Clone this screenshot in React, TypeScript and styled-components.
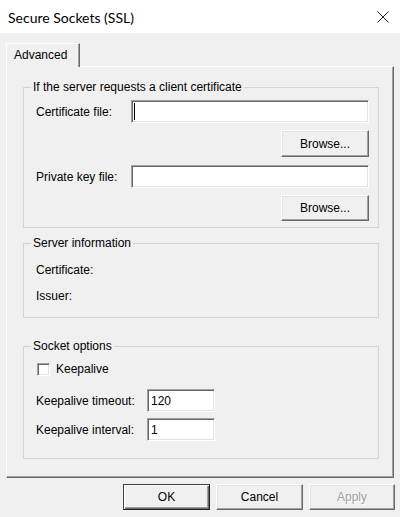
import React from "react";
import styled, { createGlobalStyle } from "styled-components";

const GlobalStyle = createGlobalStyle`
  html, body { margin: 0; padding: 0; background: #f0f0f0; }
  body {
    font-family: "Liberation Sans", Arial, sans-serif;
    font-size: 12px;
    color: #000;
  }
  * { box-sizing: border-box; }
`;

const Window = styled.div`
  width: 400px;
  height: 517px;
  background: #f0f0f0;
  display: flex;
  flex-direction: column;
  overflow: hidden;
`;

const TitleBar = styled.div`
  flex: none;
  height: 33px;
  background: #fff;
  display: flex;
  align-items: center;
  justify-content: space-between;
`;

const Title = styled.div`
  padding: 2px 0 0 8px;
  font-family: Lato, "Liberation Sans", sans-serif;
  font-size: 14px;
  line-height: 16px;
  color: #000;
`;

const CloseButton = styled.div`
  width: 34px;
  height: 33px;
  display: flex;
  align-items: center;
  justify-content: center;
`;

const Content = styled.div`
  padding: 10px 6px 0 6px;
  display: flex;
  flex-direction: column;
`;

const TabStrip = styled.div`
  height: 23px;
  display: flex;
  align-items: flex-start;
`;

const Tab = styled.div`
  position: relative;
  z-index: 1;
  width: 74px;
  height: 24px;
  padding: 0 0 2px 7px;
  display: flex;
  align-items: center;
  background: #f0f0f0;
  border-top: 1px solid #fff;
  border-left: 1px solid #fff;
  border-right: 1px solid #696969;
  box-shadow: inset -1px 0 0 #a0a0a0;
`;

const Panel = styled.div`
  height: 412px;
  padding: 13px 14px 0 16px;
  display: flex;
  flex-direction: column;
  border-top: 1px solid #fff;
  border-left: 1px solid #fff;
  border-right: 1px solid #696969;
  border-bottom: 1px solid #696969;
  box-shadow: inset -1px -1px 0 #a0a0a0;
`;

const Group = styled.fieldset<{ $mt?: number; $pt: number; $pb: number }>`
  margin: ${(p) => p.$mt ?? 0}px 0 0 0;
  min-width: 0;
  padding: ${(p) => p.$pt}px 9px ${(p) => p.$pb}px 12px;
  border: 1px solid #d3d3d3;
  display: flex;
  flex-direction: column;
`;

const Legend = styled.legend`
  margin-left: -5px;
  padding: 0 2px;
  font-size: 12px;
  line-height: 14px;
`;

const FieldRow = styled.div<{ $labelWidth: number; $mt?: number }>`
  display: grid;
  grid-template-columns: ${(p) => p.$labelWidth}px auto 1fr;
  align-items: center;
  margin-top: ${(p) => p.$mt ?? 0}px;
`;

const Label = styled.span`
  line-height: 14px;
  white-space: nowrap;
`;

const InfoLine = styled.div<{ $mt?: number }>`
  line-height: 14px;
  margin-top: ${(p) => p.$mt ?? 0}px;
`;

const TextBox = styled.div<{ $width?: number }>`
  width: ${(p) => (p.$width ? `${p.$width}px` : "100%")};
  height: 23px;
  padding-left: 3px;
  display: flex;
  align-items: center;
  background: #fff;
  border-top: 1px solid #a0a0a0;
  border-left: 1px solid #a0a0a0;
  border-bottom: 1px solid #fff;
  border-right: 1px solid #fff;
  box-shadow: inset 1px 1px 0 #696969, inset -1px -1px 0 #e3e3e3;
  font-size: 12px;
  line-height: 14px;
`;

const WideBox = styled(TextBox)`
  grid-column: 2 / 4;
`;

const Caret = styled.span`
  display: block;
  width: 1px;
  height: 17px;
  margin-left: -1px;
  background: #000;
`;

const ButtonRow = styled.div<{ $mt?: number }>`
  display: flex;
  justify-content: flex-end;
  margin-top: ${(p) => p.$mt ?? 0}px;
`;

const Button = styled.div<{ $default?: boolean; $disabled?: boolean; $w: number; $h: number }>`
  width: ${(p) => p.$w}px;
  height: ${(p) => p.$h}px;
  display: flex;
  align-items: center;
  justify-content: center;
  background: #f0f0f0;
  font-size: 12px;
  line-height: 14px;
  color: ${(p) => (p.$disabled ? "#a0a0a0" : "#000")};
  text-shadow: ${(p) => (p.$disabled ? "1px 1px 0 #fff" : "none")};
  border-top: 1px solid ${(p) => (p.$default ? "#404040" : "#fff")};
  border-left: 1px solid ${(p) => (p.$default ? "#404040" : "#fff")};
  border-bottom: 1px solid ${(p) => (p.$default ? "#202020" : "#696969")};
  border-right: 1px solid ${(p) => (p.$default ? "#202020" : "#696969")};
  box-shadow: ${(p) =>
    p.$default
      ? "inset 1px 1px 0 #fff, inset -1px -1px 0 #696969, inset -2px -2px 0 #a0a0a0"
      : "inset -1px -1px 0 #a0a0a0, inset 1px 1px 0 #e3e3e3"};
`;

const CheckRow = styled.div`
  display: flex;
  align-items: center;
  gap: 6px;
  height: 14px;
  margin-left: 1px;
`;

const CheckBox = styled.span`
  width: 13px;
  height: 13px;
  background: #fff;
  border-top: 1px solid #a0a0a0;
  border-left: 1px solid #a0a0a0;
  border-bottom: 1px solid #fff;
  border-right: 1px solid #fff;
  box-shadow: inset 1px 1px 0 #696969, inset -1px -1px 0 #e3e3e3;
`;

const Footer = styled.div`
  display: flex;
  justify-content: flex-end;
  gap: 6px;
  padding: 6px 5px 0 0;
`;

export default function App() {
  return (
    <>
      <GlobalStyle />
      <Window>
        <TitleBar>
          <Title>Secure Sockets (SSL)</Title>
          <CloseButton>
            <svg width="12" height="12" viewBox="0 0 12 12">
              <path d="M0.5 0.5 L11.5 11.5 M11.5 0.5 L0.5 11.5" stroke="#222" strokeWidth="1" fill="none" />
            </svg>
          </CloseButton>
        </TitleBar>
        <Content>
          <TabStrip>
            <Tab>Advanced</Tab>
          </TabStrip>
          <Panel>
            <Group $pt={6} $pb={6}>
              <Legend>If the server requests a client certificate</Legend>
              <FieldRow $labelWidth={95}>
                <Label>Certificate file:</Label>
                <WideBox>
                  <Caret />
                </WideBox>
              </FieldRow>
              <ButtonRow $mt={7}>
                <Button $w={88} $h={27}>Browse...</Button>
              </ButtonRow>
              <FieldRow $labelWidth={95} $mt={8}>
                <Label>Private key file:</Label>
                <WideBox />
              </FieldRow>
              <ButtonRow $mt={7}>
                <Button $w={88} $h={26}>Browse...</Button>
              </ButtonRow>
            </Group>

            <Group $mt={8} $pt={13} $pb={14}>
              <Legend>Server information</Legend>
              <InfoLine>Certificate:</InfoLine>
              <InfoLine $mt={12}>Issuer:</InfoLine>
            </Group>

            <Group $mt={21} $pt={9} $pb={17}>
              <Legend>Socket options</Legend>
              <CheckRow>
                <CheckBox />
                <Label>Keepalive</Label>
              </CheckRow>
              <FieldRow $labelWidth={111} $mt={13}>
                <Label>Keepalive timeout:</Label>
                <TextBox $width={68}>120</TextBox>
              </FieldRow>
              <FieldRow $labelWidth={111} $mt={6}>
                <Label>Keepalive interval:</Label>
                <TextBox $width={68}>1</TextBox>
              </FieldRow>
            </Group>
          </Panel>
        </Content>
        <Footer>
          <Button $default $w={87} $h={26}>OK</Button>
          <Button $w={87} $h={26}>Cancel</Button>
          <Button $disabled $w={86} $h={26}>Apply</Button>
        </Footer>
      </Window>
    </>
  );
}
